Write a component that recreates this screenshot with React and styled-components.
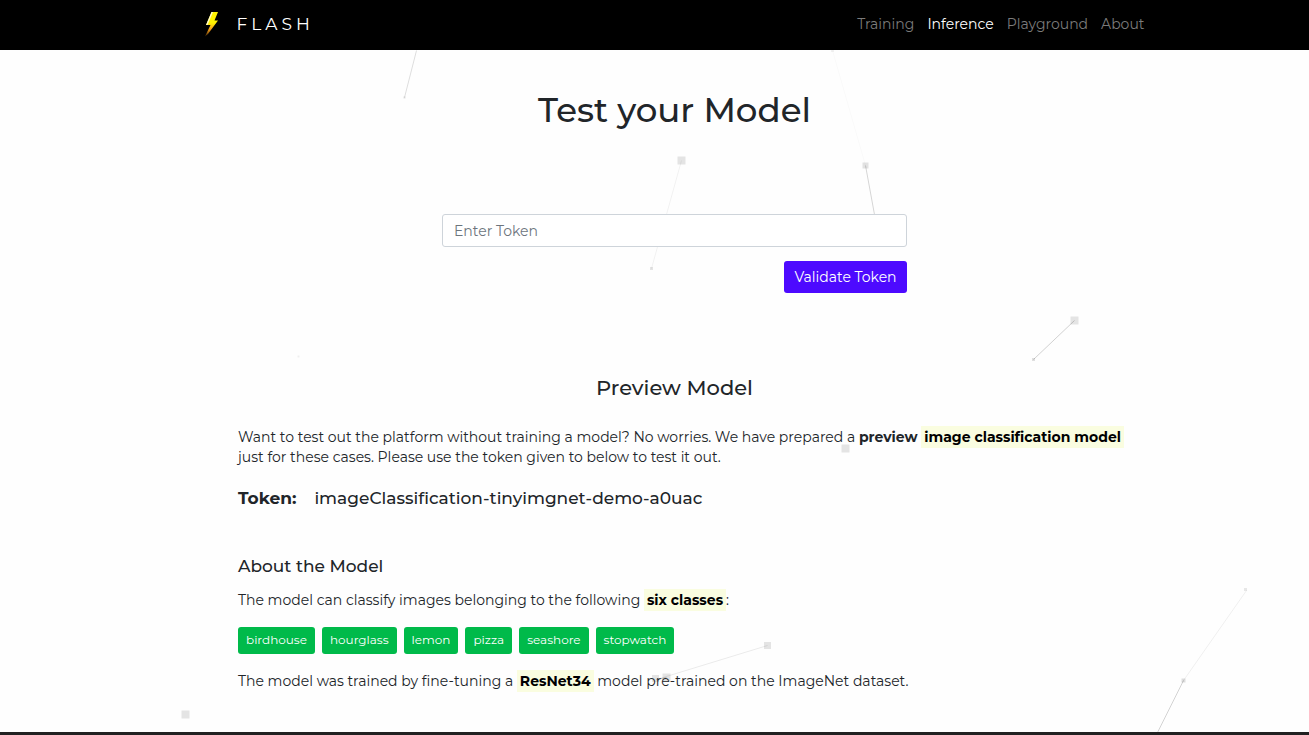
import React from "react";
import styled, { createGlobalStyle } from "styled-components";

const GlobalStyle = createGlobalStyle`
  *, *::before, *::after { box-sizing: border-box; }
  body {
    margin: 0;
    background: #fefefe;
    color: #212529;
    font-family: Montserrat, Inter, "Open Sans", sans-serif;
    font-size: 14px;
    line-height: 20px;
  }
  h1, h2, h3, p { margin: 0; font-weight: 500; }
  p { font-weight: 400; }
`;

const Page = styled.div`
  display: flex;
  flex-direction: column;
  min-height: 100vh;
`;

const NavBar = styled.header`
  height: 50px;
  padding-left: 40px;
  background: #000;
`;

const NavInner = styled.div`
  display: flex;
  align-items: center;
  justify-content: space-between;
  max-width: 944px;
  height: 48px;
  margin: 0 auto;
  padding-right: 2px;
`;

const Brand = styled.a`
  display: flex;
  align-items: center;
  gap: 16px;
  color: #fff;
  font-size: 17px;
  font-weight: 400;
  letter-spacing: 4px;
  text-decoration: none;
`;

const NavLinks = styled.nav`
  display: flex;
  gap: 13px;
`;

const NavLink = styled.a`
  color: ${(p) => (p.$active ? "#fff" : "#7b7b7b")};
  text-decoration: none;
`;

const Main = styled.main`
  position: relative;
  flex: 1;
  padding: 40px 0 40px 40px;
`;

const Network = styled.svg`
  position: absolute;
  inset: 0;
  width: 100%;
  height: 100%;
`;

const Content = styled.div`
  position: relative;
  max-width: 909px;
  margin: 0 auto;
  padding: 0 18px;
`;

const Title = styled.h1`
  font-size: 34px;
  line-height: 40px;
  text-align: center;
`;

const TokenForm = styled.form`
  display: flex;
  flex-direction: column;
  align-items: flex-end;
  gap: 14px;
  max-width: 465px;
  margin: 84px auto 0;
`;

const TokenInput = styled.input`
  width: 100%;
  height: 33px;
  padding: 0 11px;
  border: 1px solid #ced4da;
  border-radius: 3px;
  background: #fff;
  color: #495057;
  font: inherit;
  &::placeholder { color: #6c757d; opacity: 1; }
`;

const SubmitButton = styled.button`
  width: 123px;
  height: 32px;
  padding: 0;
  border: 0;
  border-radius: 3px;
  background: #4d0aff;
  color: #fff;
  font: inherit;
`;

const Heading = styled.h2`
  margin-top: 82px;
  font-size: 21px;
  line-height: 26px;
  text-align: center;
`;

const Intro = styled.p`
  margin: 26px -16px 0 0;
`;

const Mark = styled.mark`
  padding: 2px 3px;
  background: #fafde0;
  color: #000;
  font-weight: 700;
`;

const TokenLine = styled.p`
  display: flex;
  gap: 18px;
  margin-top: 21px;
  font-size: 17px;
  font-weight: 500;
`;

const SubHeading = styled.h3`
  margin-top: 48px;
  font-size: 17px;
  line-height: 20px;
`;

const Text = styled.p`
  margin-top: ${(p) => p.$gap}px;
`;

const Tags = styled.ul`
  display: flex;
  flex-wrap: wrap;
  gap: 7px;
  margin: 17px 0 0;
  padding: 0;
  list-style: none;
`;

const Tag = styled.li`
  height: 27px;
  padding: 0 8px;
  border-radius: 3px;
  background: #00ba4a;
  color: #fff;
  font-size: 12px;
  line-height: 25px;
`;

const Footer = styled.footer`
  height: 3px;
  background: #212121;
`;

const LINES = [
  [416, 0, 404, 47, 0.13],
  [832, 0, 865, 115, 0.02],
  [865, 115, 876, 175, 0.16],
  [681, 110, 651, 218, 0.05],
  [1074, 270, 1033, 309, 0.18],
  [767, 595, 656, 629, 0.08],
  [666, 627, 656, 629, 0.2],
  [1246, 540, 1183, 630, 0.06],
  [1183, 630, 1155, 686, 0.17],
];

const NODES = [
  [404, 47, 2, 0.11], [681, 110, 8, 0.1], [865, 115, 6, 0.11], [651, 218, 3, 0.1],
  [1074, 270, 8, 0.1], [1033, 309, 3, 0.12], [298, 306, 2, 0.06], [845, 398, 8, 0.1],
  [767, 595, 7, 0.1], [655, 628, 7, 0.1], [666, 627, 8, 0.1], [1245, 539, 3, 0.09],
  [1183, 630, 4, 0.13], [185, 664, 8, 0.1], [832, 0, 3, 0.05],
];

const CLASSES = ["birdhouse", "hourglass", "lemon", "pizza", "seashore", "stopwatch"];
const LINKS = ["Training", "Inference", "Playground", "About"];

function Bolt() {
  return (
    <svg width="18" height="26" viewBox="0 0 18 26" aria-hidden="true">
      <defs>
        <linearGradient id="bolt" x1="0" y1="0" x2="0" y2="1">
          <stop offset="0.45" stopColor="#fff200" />
          <stop offset="0.7" stopColor="#f9a01b" />
          <stop offset="1" stopColor="#3a2000" />
        </linearGradient>
      </defs>
      <path d="M8.5 1H15l-3.500 8.500H15L5 23l-3 2.500L7.500 14H3z" fill="url(#bolt)" />
      <path d="M8.500 1L3 14h1.500L10 1z" fill="#fffbd0" />
    </svg>
  );
}

export default function App() {
  return (
    <Page>
      <GlobalStyle />
      <NavBar>
        <NavInner>
          <Brand href="#"><Bolt />FLASH</Brand>
          <NavLinks>
            {LINKS.map((name) => (
              <NavLink key={name} href="#" $active={name === "Inference"}>{name}</NavLink>
            ))}
          </NavLinks>
        </NavInner>
      </NavBar>
      <Main>
        <Network viewBox="0 0 1309 682" preserveAspectRatio="xMidYMin slice" aria-hidden="true">
          {LINES.map(([x1, y1, x2, y2, o]) => (
            <line key={`${x1}-${y1}-${x2}`} x1={x1 + 0.5} y1={y1 + 0.5} x2={x2 + 0.5} y2={y2 + 0.5} stroke="#000" strokeOpacity={o} />
          ))}
          {NODES.map(([x, y, s, o]) => (
            <rect key={`${x}-${y}`} x={x + 0.5 - s / 2} y={y + 0.5 - s / 2} width={s} height={s} fill="#000" fillOpacity={o} />
          ))}
        </Network>
        <Content>
          <Title>Test your Model</Title>
          <TokenForm onSubmit={(e) => e.preventDefault()}>
            <TokenInput type="text" placeholder="Enter Token" aria-label="Enter Token" />
            <SubmitButton type="submit">Validate Token</SubmitButton>
          </TokenForm>
          <Heading>Preview Model</Heading>
          <Intro>
            Want to test out the platform without training a model? No worries. We have prepared a{" "}
            <b>preview</b> <Mark>image classification model</Mark> just for these cases. Please use the
            token given to below to test it out.
          </Intro>
          <TokenLine><b>Token:</b><span>imageClassification-tinyimgnet-demo-a0uac</span></TokenLine>
          <SubHeading>About the Model</SubHeading>
          <Text $gap={14}>
            The model can classify images belonging to the following <Mark>six classes</Mark>:
          </Text>
          <Tags>{CLASSES.map((c) => <Tag key={c}>{c}</Tag>)}</Tags>
          <Text $gap={17}>
            The model was trained by fine-tuning a <Mark>ResNet34</Mark> model pre-trained on the
            ImageNet dataset.
          </Text>
        </Content>
      </Main>
      <Footer />
    </Page>
  );
}
